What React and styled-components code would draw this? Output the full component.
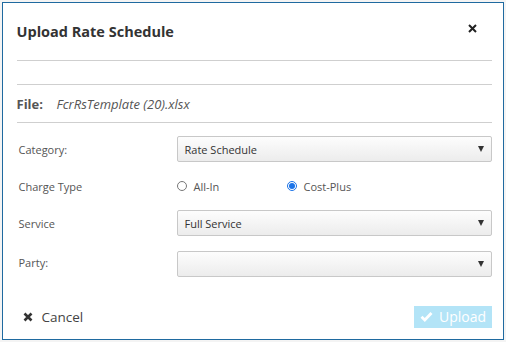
import React, { useState } from 'react';
import styled, { createGlobalStyle } from 'styled-components';

const GlobalStyle = createGlobalStyle`
  html, body {
    margin: 0;
    padding: 0;
    background: #f4f4f4;
    font-family: "Open Sans", "Liberation Sans", sans-serif;
  }
`;

const Page = styled.div`
  width: 506px;
  height: 342px;
  padding: 2px;
  box-sizing: border-box;
`;

const Dialog = styled.div`
  width: 502px;
  height: 338px;
  box-sizing: border-box;
  border: 1.5px solid #1f6aa0;
  background: #fff;
  padding: 0 11px 0 13.5px;
  display: flex;
  flex-direction: column;
`;

const Header = styled.div`
  display: flex;
  align-items: center;
  justify-content: space-between;
  height: 57px;
  border-bottom: 1px solid #cfcfcf;
`;

const Title = styled.h4`
  margin: 0;
  font-size: 14.5px;
  font-weight: 700;
  color: #333;
`;

const Close = styled.button`
  border: none;
  background: none;
  padding: 0;
  margin-right: 15px;
  margin-bottom: 6px;
  display: flex;
  cursor: pointer;
`;

const Spacer = styled.div`
  height: 23px;
  border-bottom: 1px solid #cfcfcf;
`;

const FileRow = styled.div`
  display: flex;
  align-items: center;
  height: 37px;
  border-bottom: 1px solid #cfcfcf;
  color: #555;
  font-size: 13px;
`;

const FileLabel = styled.span`
  font-weight: 700;
  width: 40px;
`;

const FileName = styled.span`
  font-style: italic;
`;

const Form = styled.div`
  display: grid;
  grid-template-columns: 160px 1fr;
  grid-auto-rows: auto;
  row-gap: 11px;
  padding-top: 13px;
`;

const Label = styled.div`
  font-size: 11px;
  color: #555;
  display: flex;
  align-items: center;
  height: ${p => p.$h || 26}px;
  padding-left: 2px;
`;

const SelectBox = styled.div`
  height: 26px;
  box-sizing: border-box;
  border: 1px solid #c8c8c8;
  border-radius: 2px;
  background: linear-gradient(#fdfdfd, #ececec);
  display: flex;
  align-items: center;
  justify-content: space-between;
  padding: 0 7px 0 7px;
  font-size: 11px;
  color: #333;
`;

const Caret = styled.span`
  width: 0;
  height: 0;
  border-left: 3.5px solid transparent;
  border-right: 3.5px solid transparent;
  border-top: 6px solid #333;
`;

const Radios = styled.div`
  display: flex;
  align-items: center;
  height: 26px;
  padding-left: 0;
`;

const RadioItem = styled.label`
  display: flex;
  align-items: center;
  gap: 7px;
  width: ${p => p.$w}px;
  font-size: 11px;
  color: #555;
`;

const RadioDot = styled.span`
  width: 10px;
  height: 10px;
  border-radius: 50%;
  box-sizing: border-box;
  border: 1px solid ${p => (p.$on ? '#1a73e8' : '#777')};
  display: flex;
  align-items: center;
  justify-content: center;
  &::after {
    content: '';
    width: 6px;
    height: 6px;
    border-radius: 50%;
    background: ${p => (p.$on ? '#1a73e8' : 'transparent')};
  }
`;

const Footer = styled.div`
  display: flex;
  justify-content: space-between;
  align-items: center;
  margin-top: auto;
  height: 22px;
  margin-bottom: 11.5px;
`;

const CancelBtn = styled.button`
  border: none;
  background: none;
  display: flex;
  align-items: center;
  gap: 9px;
  padding: 0 0 0 6px;
  font-family: "Open Sans", "Liberation Sans", sans-serif;
  font-size: 13.5px;
  color: #444;
  cursor: pointer;
`;

const UploadBtn = styled.button`
  border: none;
  background: #b3e4f7;
  color: #fff;
  height: 22px;
  width: 78px;
  display: flex;
  align-items: center;
  justify-content: center;
  gap: 6px;
  font-family: "Open Sans", "Liberation Sans", sans-serif;
  font-size: 14px;
  padding: 0;
`;

const Select = ({ value }) => (
  <SelectBox>
    <span>{value}</span>
    <Caret />
  </SelectBox>
);

export default function App() {
  const [charge, setCharge] = useState('cost');
  return (
    <Page>
      <GlobalStyle />
      <Dialog>
        <Header>
          <Title>Upload Rate Schedule</Title>
          <Close aria-label="Close">
            <svg width="9" height="9" viewBox="0 0 9 9">
              <path d="M1 1 L8 8 M8 1 L1 8" stroke="#222" strokeWidth="2" />
            </svg>
          </Close>
        </Header>
        <Spacer />
        <FileRow>
          <FileLabel>File:</FileLabel>
          <FileName>FcrRsTemplate (20).xlsx</FileName>
        </FileRow>
        <Form>
          <Label>Category:</Label>
          <Select value="Rate Schedule" />
          <Label>Charge Type</Label>
          <Radios>
            <RadioItem $w={110} onClick={() => setCharge('all')}>
              <RadioDot $on={charge === 'all'} />
              All-In
            </RadioItem>
            <RadioItem $w={100} onClick={() => setCharge('cost')}>
              <RadioDot $on={charge === 'cost'} />
              Cost-Plus
            </RadioItem>
          </Radios>
          <Label>Service</Label>
          <Select value="Full Service" />
          <Label $h={30}>Party:</Label>
          <div style={{ paddingTop: 4 }}>
            <Select value="" />
          </div>
        </Form>
        <Footer>
          <CancelBtn>
            <svg width="10" height="10" viewBox="0 0 10 10">
              <path d="M1.5 1.5 L8.5 8.5 M8.5 1.5 L1.5 8.5" stroke="#333" strokeWidth="2.6" strokeLinecap="butt" />
            </svg>
            Cancel
          </CancelBtn>
          <UploadBtn>
            <svg width="13" height="11" viewBox="0 0 13 11">
              <path d="M1.5 5.8 L4.8 9 L11.5 2" stroke="#fff" strokeWidth="2.8" fill="none" />
            </svg>
            Upload
          </UploadBtn>
        </Footer>
      </Dialog>
    </Page>
  );
}
